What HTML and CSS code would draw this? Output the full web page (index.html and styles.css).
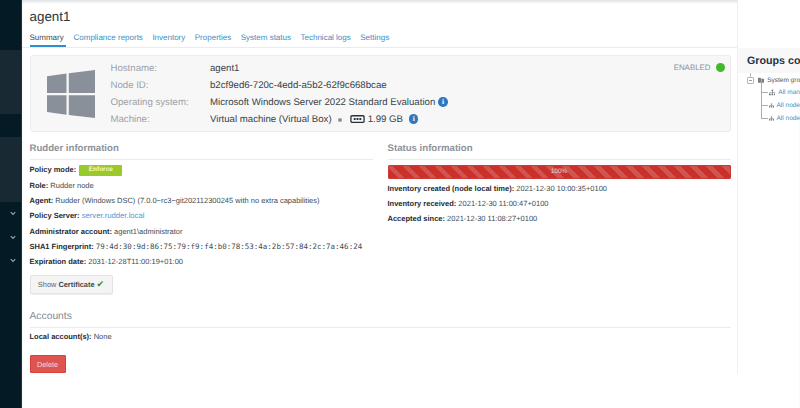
FILE: index.html
```html
<!DOCTYPE html>
<html lang="en">
<head>
<meta charset="utf-8">
<title>agent1</title>
<link rel="stylesheet" href="styles.css">
</head>
<body>
<div class="app">
  <aside class="sidebar">
    <div class="band dark h50"></div>
    <div class="band light h64"></div>
    <div class="band dark h23"></div>
    <div class="band light h65"></div>
    <div class="menu">
      <svg class="chev" viewBox="0 0 8 6"><path d="M1 1.5 4 4.5 7 1.5" fill="none" stroke="#9aa5ab" stroke-width="1.5"/></svg>
      <svg class="chev" viewBox="0 0 8 6"><path d="M1 1.5 4 4.5 7 1.5" fill="none" stroke="#9aa5ab" stroke-width="1.5"/></svg>
      <svg class="chev" viewBox="0 0 8 6"><path d="M1 1.5 4 4.5 7 1.5" fill="none" stroke="#9aa5ab" stroke-width="1.5"/></svg>
    </div>
  </aside>
  <main class="main">
    <div class="center">
      <header class="head">
        <h1 class="title">agent1</h1>
        <nav class="tabs">
          <a class="tab active">Summary</a>
          <a class="tab">Compliance reports</a>
          <a class="tab">Inventory</a>
          <a class="tab">Properties</a>
          <a class="tab">System status</a>
          <a class="tab">Technical logs</a>
          <a class="tab">Settings</a>
        </nav>
      </header>
      <div class="content">
        <section class="card">
          <svg class="oslogo" viewBox="0 0 48 48"><path fill="#8a9099" d="M0 6.2 19.500 3.500V23H0ZM21.800 3.200 48 0V23H21.800ZM0 25.300H19.500V44.800L0 42ZM21.800 25.300H48V48L21.800 45Z"/></svg>
          <dl class="facts">
            <dt>Hostname:</dt><dd>agent1</dd>
            <dt>Node ID:</dt><dd>b2cf9ed6-720c-4edd-a5b2-62f9c668bcae</dd>
            <dt>Operating system:</dt><dd>Microsoft Windows Server 2022 Standard Evaluation <span class="info">i</span></dd>
            <dt>Machine:</dt><dd>Virtual machine (Virtual Box) <span class="dot"></span> <svg class="ram" viewBox="0 0 16 10"><rect x="1" y="1.500" width="14" height="7" rx="1" fill="none" stroke="#26323a" stroke-width="1.400"/><path d="M4 4h2v2H4zM7 4h2v2H7zM10 4h2v2h-2z" fill="#26323a"/></svg> 1.99 GB <span class="info gap">i</span></dd>
          </dl>
          <div class="state">ENABLED <span class="led"></span></div>
        </section>
        <div class="cols">
          <section class="col">
            <h2 class="sec">Rudder information</h2>
            <p class="row"><b>Policy mode:</b> <span class="badge">Enforce</span></p>
            <p class="row"><b>Role:</b> Rudder node</p>
            <p class="row"><b>Agent:</b> Rudder (Windows DSC) (7.0.0~rc3~git202112300245 with no extra capabilities)</p>
            <p class="row"><b>Policy Server:</b> <a class="link">server.rudder.local</a></p>
            <p class="row"><b>Administrator account:</b> agent1\administrator</p>
            <p class="row"><b>SHA1 Fingerprint:</b> <span class="mono">79:4d:30:9d:86:75:79:f9:f4:b0:78:53:4a:2b:57:84:2c:7a:46:24</span></p>
            <p class="row"><b>Expiration date:</b> 2031-12-28T11:00:19+01:00</p>
            <button class="btn">Show <b>Certificate</b> <span class="check">✔</span></button>
          </section>
          <section class="col">
            <h2 class="sec">Status information</h2>
            <div class="bar">100%</div>
            <p class="row"><b>Inventory created (node local time):</b> 2021-12-30 10:00:35+0100</p>
            <p class="row"><b>Inventory received:</b> 2021-12-30 11:00:47+0100</p>
            <p class="row"><b>Accepted since:</b> 2021-12-30 11:08:27+0100</p>
          </section>
        </div>
        <h2 class="sec thin">Accounts</h2>
        <p class="row tight"><b>Local account(s):</b> None</p>
        <button class="del">Delete</button>
      </div>
    </div>
    <aside class="groups">
      <h2 class="gtitle">Groups co</h2>
      <ul class="tree">
        <li class="root">
          <span class="minus"></span>
          <svg class="folder" viewBox="0 0 12 10"><path fill="#7b7f85" d="M0 1h4.500l1 1.500H12V10H0z"/></svg>
          <span>System gro</span>
        </li>
        <li class="leaf"><svg class="net" viewBox="0 0 12 10"><path fill="#6f7479" d="M4.500 0h3v2.500h-3zM5.500 2.500h1V4.500H11V7h-1V5.500H6.500V7h-1V5.500H2V7H1V4.500h4.500zM0 7h3v3H0zM4.500 7h3v3h-3zM9 7h3v3H9z"/></svg><a>All man</a></li>
        <li class="leaf"><svg class="net" viewBox="0 0 12 10"><path fill="#6f7479" d="M4.500 0h3v2.500h-3zM5.500 2.500h1V4.500H11V7h-1V5.500H6.500V7h-1V5.500H2V7H1V4.500h4.500zM0 7h3v3H0zM4.500 7h3v3h-3zM9 7h3v3H9z"/></svg><a>All node</a></li>
        <li class="leaf"><svg class="net" viewBox="0 0 12 10"><path fill="#6f7479" d="M4.500 0h3v2.500h-3zM5.500 2.500h1V4.500H11V7h-1V5.500H6.500V7h-1V5.500H2V7H1V4.500h4.500zM0 7h3v3H0zM4.500 7h3v3h-3zM9 7h3v3H9z"/></svg><a>All node</a></li>
      </ul>
    </aside>
  </main>
</div>
</body>
</html>
```
FILE: styles.css
```css
* { box-sizing: border-box; }
html, body { margin: 0; height: 408px; overflow: hidden; }
body { font-family: "Liberation Sans", Arial, sans-serif; font-size: 7.5px; color: #36424a; background: #fff; text-rendering: geometricPrecision; }
p, h1, h2, dl, dd, ul { margin: 0; padding: 0; }
.app { display: flex; height: 408px; }
.sidebar { width: 22px; flex: none; background: #041a24; border-right: 1px solid #2a2f33; display: flex; flex-direction: column; }
.band.dark { background: #041a24; }
.band.light { background: #182934; }
.h50 { height: 50px; }
.h64 { height: 64px; }
.h23 { height: 23px; }
.h65 { height: 65px; }
.menu { display: flex; flex-direction: column; align-items: flex-end; gap: 19px; padding: 9px 5px 0 0; }
.chev { width: 6px; height: 4.5px; display: block; }
.main { flex: 1; display: flex; min-width: 0; box-shadow: inset 0 3px 3px -1px #dfe2e6; }
.center { width: 716px; flex: none; border-right: 1px solid #eeeff1; display: flex; flex-direction: column; height: 374px; }
.head { padding-top: 10.5px; border-bottom: 1px solid #e9ebee; height: 48px; flex: none; }
.title { font-size: 13.4px; font-weight: 400; color: #2a3640; line-height: 12px; padding: 0 0 0 7.5px; margin-bottom: 10.5px; }
.tabs { display: flex; gap: 9.5px; padding-left: 7.5px; height: 14px; }
.tab { font-size: 8px; line-height: 10px; color: #3f8dc4; height: 14px; display: block; }
.tab.active { color: #41484f; border-bottom: 2px solid #2f8fce; width: 36px; margin-right: -1.5px; }
.content { padding: 7px 6px 0 7.5px; flex: 1; }
.card { display: flex; position: relative; height: 77px; background: #f7f7f7; border: 1px solid #ececec; border-radius: 3px; padding: 0 0 0 16px; }
.oslogo { width: 48px; height: 48px; flex: none; margin: 14px 16px 0 0; }
.facts { display: grid; grid-template-columns: 99.5px 1fr; grid-auto-rows: 17px; padding-top: 3.5px; font-size: 9.65px; align-items: center; }
.facts dt { color: #9ba1a7; }
.facts dd { color: #36424a; white-space: nowrap; display: flex; align-items: center; gap: 3px; }
.info { display: inline-block; width: 9.5px; height: 9.5px; border-radius: 50%; background: #2f78bd; color: #fff; font-size: 7.5px; font-weight: 700; line-height: 9.5px; text-align: center; font-family: "Liberation Serif", serif; }
.info.gap { margin-left: 3px; }
.dot { display: inline-block; width: 4px; height: 4px; border-radius: 50%; background: #8d9398; margin: 1px 5px 0 3px; }
.ram { width: 15px; height: 10px; }
.state { position: absolute; top: 6.5px; right: 5px; font-size: 7.9px; color: #8b9298; display: flex; align-items: center; gap: 5.5px; }
.led { width: 9px; height: 9px; border-radius: 50%; background: #44b82c; }
.cols { display: grid; grid-template-columns: 343px 343px; gap: 15px; }
.sec { font-size: 9.65px; font-weight: 700; color: #8c939b; line-height: 12px; padding: 11px 0 4px; border-bottom: 1px solid #e9ebee; height: 28px; }
.sec.thin { font-weight: 400; color: #848b93; font-size: 10.3px; margin-top: 7.6px; height: 26px; padding-top: 9px; }
.row { font-size: 7.5px; line-height: 10.2px; margin-top: 5px; color: #414b52; white-space: nowrap; }
.row.tight { margin-top: 4px; }
.row b { color: #1f2a31; }
.badge { display: inline-block; width: 43px; height: 11px; background: #9ac92c; border-radius: 1px; color: #f2f8df; font-size: 6.5px; font-weight: 700; text-align: center; line-height: 10px; vertical-align: top; margin-left: 1px; }
.link { color: #4b9ad2; font-size: 7.7px; }
.mono { font-family: "DejaVu Sans Mono", monospace; font-size: 7.5px; }
.btn { display: block; margin-top: 8px; width: 83px; height: 19px; padding: 0; border: 1px solid #e3e3e3; border-radius: 2px; background: #f4f4f4; font: 7.4px "Liberation Sans", sans-serif; text-rendering: geometricPrecision; color: #5a6269; box-shadow: 0 1px 1px #eee; }
.btn b { color: #414a51; }
.check { color: #3c8a3a; font-size: 9px; }
.bar { height: 14px; margin-top: 5px; border: 1px solid #cc3a35; border-radius: 1px; color: #f4d8d6; font-size: 6.5px; line-height: 12px; text-align: center; background: repeating-linear-gradient(45deg, #cb302a 0 6.5px, #d05551 6.5px 11.3px); }
.del { display: block; margin-top: 13px; width: 36px; height: 18px; padding: 0; border: 1px solid #d9403c; border-radius: 1px; background: #dd5450; color: #f8dcda; font: 7.3px "Liberation Sans", sans-serif; text-rendering: geometricPrecision; }
.groups { flex: 1; min-width: 0; overflow: hidden; height: 374px; white-space: nowrap; }
.gtitle { font-size: 10.7px; line-height: 13px; font-weight: 700; color: #253043; padding: 55px 0 0 9px; height: 73px; background: linear-gradient(#fff 0 48px, #f8f8f9 48px); }
.tree { list-style: none; padding: 1px 0 0 9px; position: relative; font-size: 6.5px; }
.tree::before { content: ""; position: absolute; left: 12px; top: 0; width: 1px; height: 4px; background: #b4b8bb; }
.tree li { display: flex; align-items: center; height: 13px; gap: 3px; position: relative; }
.tree .root { color: #4d5459; height: 12px; }
.minus { width: 7px; height: 7px; border: 1px solid #b4b8bb; border-radius: 1px; position: relative; margin-right: 1px; }
.minus::after { content: ""; position: absolute; left: 1px; top: 2px; width: 3px; height: 1px; background: #9a9ea2; }
.folder { width: 7px; height: 6px; }
.leaf { padding-left: 21.5px; color: #3f8dc4; }
.leaf::before { content: ""; position: absolute; left: 14px; top: -7px; width: 6px; height: 13px; border-left: 1px solid #a9adb0; border-bottom: 1px solid #a9adb0; }
.net { width: 8px; height: 7px; }
```
